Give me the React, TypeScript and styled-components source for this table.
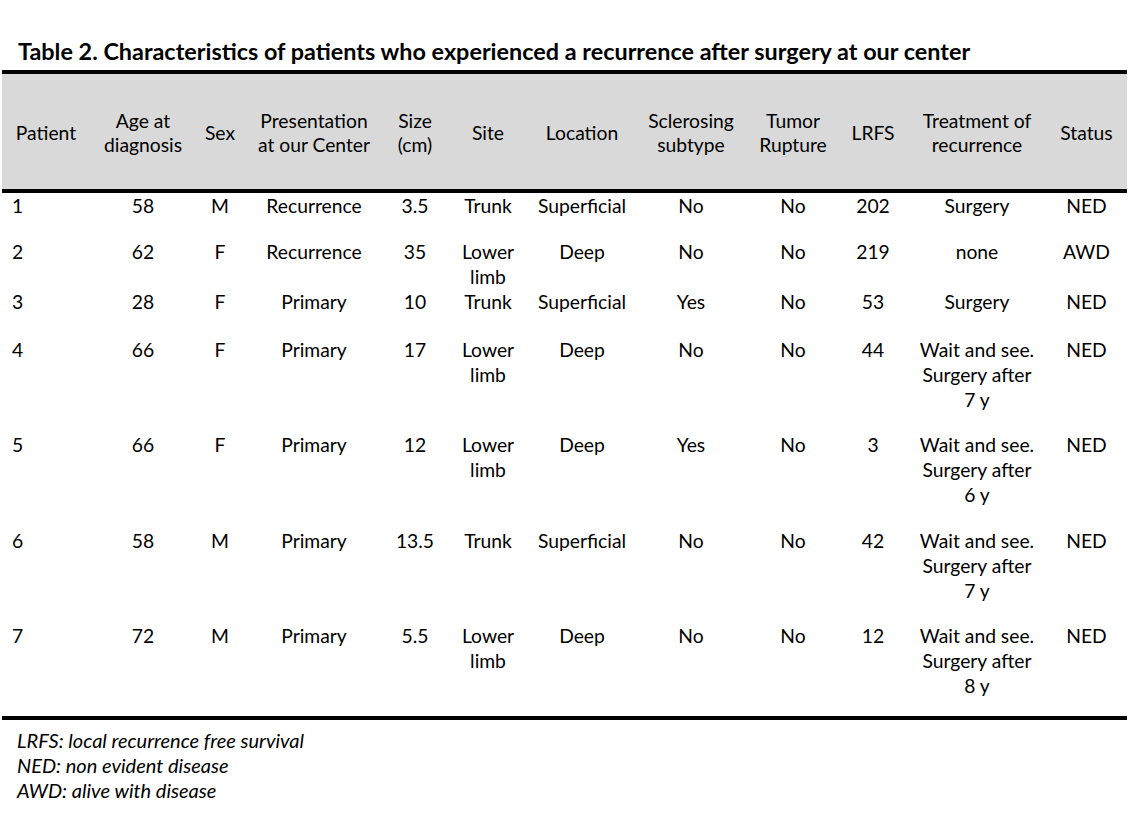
import React from "react";
import styled, { createGlobalStyle } from "styled-components";

const Global = createGlobalStyle`
  html, body { margin: 0; padding: 0; background: #ffffff; }
  body { font-family: Lato, "Open Sans", "Liberation Sans", sans-serif; color: #000; }
`;

const Page = styled.div`
  width: 1131px;
  height: 820px;
  padding: 39px 4px 0 2px;
  box-sizing: border-box;
`;

const Title = styled.h1`
  margin: 0 0 7px 16px;
  font-size: 23.4px;
  line-height: 24px;
  font-weight: 700;
  letter-spacing: 0;
  white-space: nowrap;
`;

const Table = styled.table`
  width: 1125px;
  border-collapse: collapse;
  table-layout: fixed;
  font-size: 19.3px;
  line-height: 25px;
  border-top: 4px solid #000;
  border-bottom: 4px solid #000;
`;

const HeadRow = styled.tr`
  background: #d9d9d9;
  height: 119px;
  border-bottom: 4px solid #000;
`;

const HeadCell = styled.th<{ $w: number }>`
  width: ${(p) => p.$w}px;
  padding: 2px 0 0 0;
  font-weight: 400;
  text-align: center;
  vertical-align: middle;
  line-height: 24px;
`;

const Row = styled.tr<{ $pad: number }>`
  & > td { padding-bottom: ${(p) => p.$pad}px; }
`;

const Cell = styled.td<{ $left?: boolean }>`
  padding: 0;
  text-align: ${(p) => (p.$left ? "left" : "center")};
  padding-left: ${(p) => (p.$left ? "10px" : "0")} !important;
  vertical-align: top;
`;

const Notes = styled.div`
  padding: 8px 0 0 15px;
  font-style: italic;
  font-size: 20px;
  line-height: 25px;
`;

const cols: { label: React.ReactNode; w: number }[] = [
  { label: "Patient", w: 88 },
  { label: <>Age at<br />diagnosis</>, w: 106 },
  { label: "Sex", w: 48 },
  { label: <>Presentation<br />at our Center</>, w: 140 },
  { label: <>Size<br />(cm)</>, w: 62 },
  { label: "Site", w: 84 },
  { label: "Location", w: 104 },
  { label: <>Sclerosing<br />subtype</>, w: 114 },
  { label: <>Tumor<br />Rupture</>, w: 90 },
  { label: "LRFS", w: 70 },
  { label: <>Treatment of<br />recurrence</>, w: 138 },
  { label: "Status", w: 81 },
];

type R = { cells: React.ReactNode[]; pad: number };

const wait = (n: number) => (
  <>Wait and see.<br />Surgery after<br />{n} y</>
);
const lower = <>Lower<br />limb</>;

const rows: R[] = [
  { cells: ["1", "58", "M", "Recurrence", "3.5", "Trunk", "Superficial", "No", "No", "202", "Surgery", "NED"], pad: 21 },
  { cells: ["2", "62", "F", "Recurrence", "35", lower, "Deep", "No", "No", "219", "none", "AWD"], pad: 0 },
  { cells: ["3", "28", "F", "Primary", "10", "Trunk", "Superficial", "Yes", "No", "53", "Surgery", "NED"], pad: 23 },
  { cells: ["4", "66", "F", "Primary", "17", lower, "Deep", "No", "No", "44", wait(7), "NED"], pad: 20 },
  { cells: ["5", "66", "F", "Primary", "12", lower, "Deep", "Yes", "No", "3", wait(6), "NED"], pad: 21 },
  { cells: ["6", "58", "M", "Primary", "13.5", "Trunk", "Superficial", "No", "No", "42", wait(7), "NED"], pad: 20 },
  { cells: ["7", "72", "M", "Primary", "5.5", lower, "Deep", "No", "No", "12", wait(8), "NED"], pad: 18 },
];

export default function App() {
  return (
    <Page>
      <Global />
      <Title>Table 2. Characteristics of patients who experienced a recurrence after surgery at our center</Title>
      <Table>
        <thead>
          <HeadRow>
            {cols.map((c, i) => (
              <HeadCell key={i} $w={c.w}>{c.label}</HeadCell>
            ))}
          </HeadRow>
        </thead>
        <tbody>
          {rows.map((r, i) => (
            <Row key={i} $pad={r.pad}>
              {r.cells.map((c, j) => (
                <Cell key={j} $left={j === 0}>{c}</Cell>
              ))}
            </Row>
          ))}
        </tbody>
      </Table>
      <Notes>
        LRFS: local recurrence free survival<br />
        NED: non evident disease<br />
        AWD: alive with disease
      </Notes>
    </Page>
  );
}
